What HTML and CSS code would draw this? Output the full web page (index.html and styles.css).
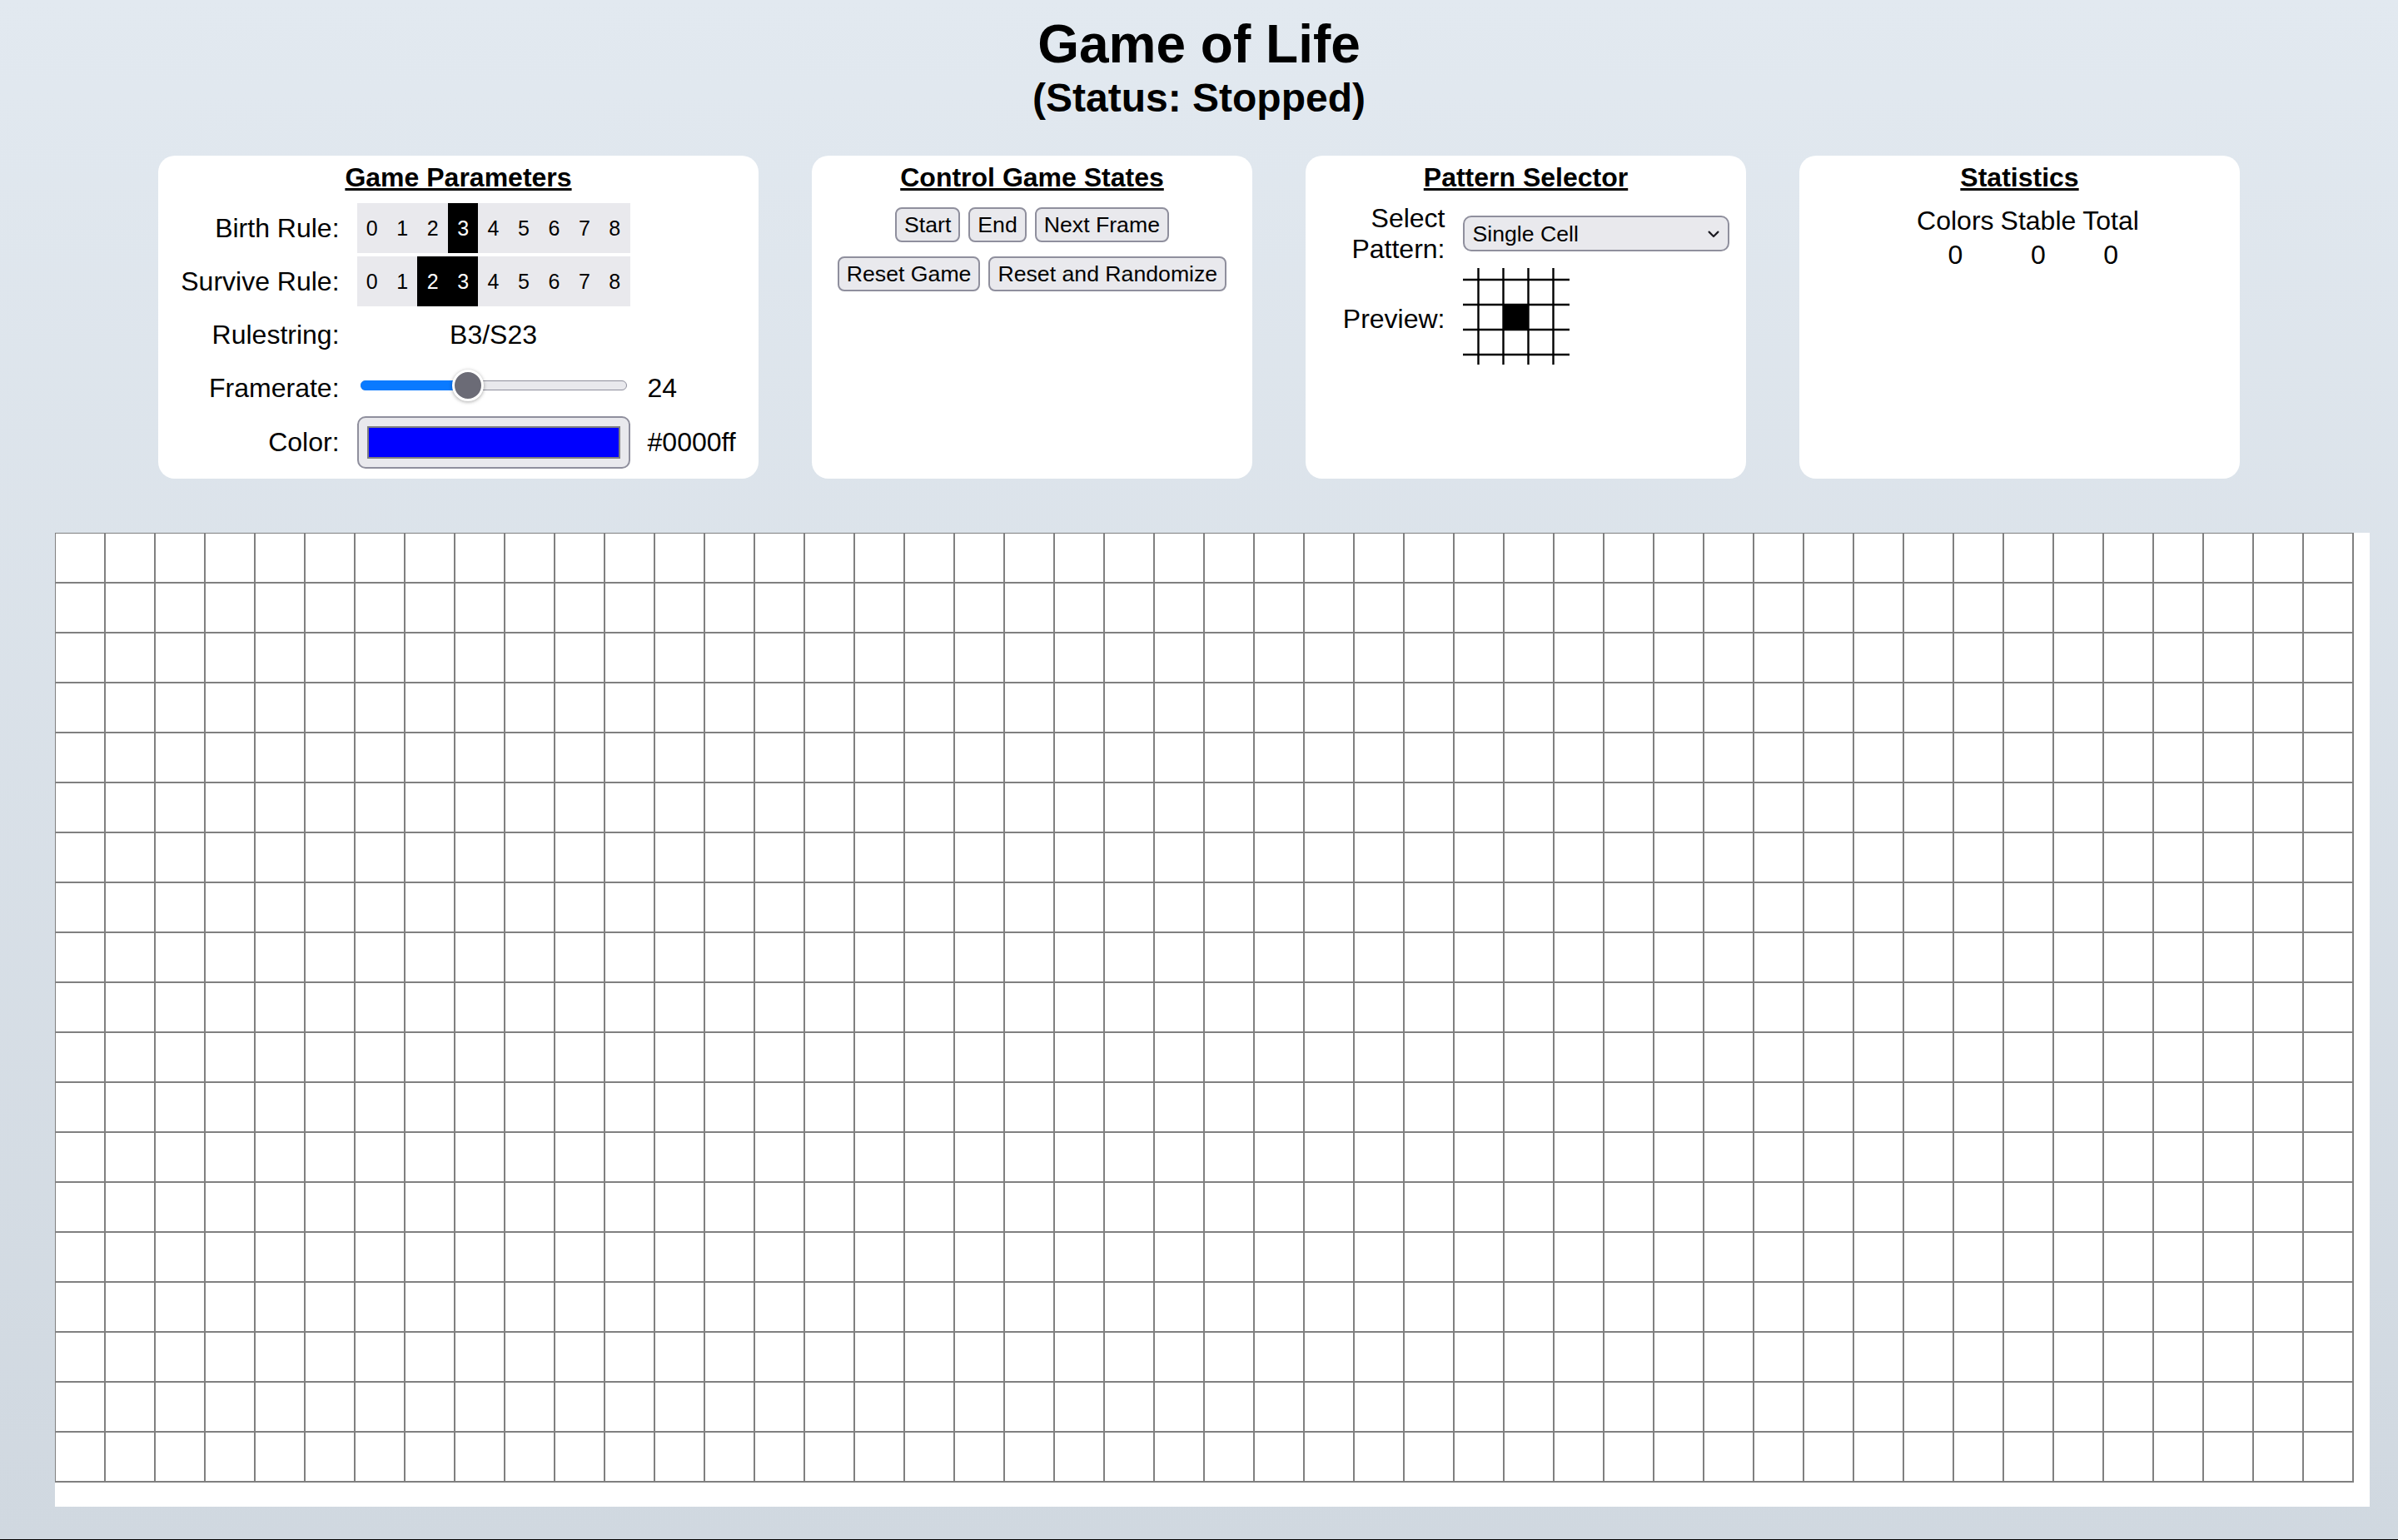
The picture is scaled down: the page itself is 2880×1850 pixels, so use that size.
FILE: index.html
```html
<!DOCTYPE html>
<html lang="en">
<head>
<meta charset="utf-8">
<title>Game of Life</title>
<link rel="stylesheet" href="styles.css">
</head>
<body>
<header class="title">
  <h1>Game of Life</h1>
  <h2>(Status: Stopped)</h2>
</header>

<section class="panels">
  <div class="panel panel-params">
    <h3 class="panel-title">Game Parameters</h3>
    <div class="param-grid">
      <span class="label nowrap">Birth Rule:</span>
      <div class="digits">
        <span class="digit">0</span><span class="digit">1</span><span class="digit">2</span><span class="digit on">3</span><span class="digit">4</span><span class="digit">5</span><span class="digit">6</span><span class="digit">7</span><span class="digit">8</span>
      </div>
      <span class="value"></span>

      <span class="label nowrap">Survive Rule:</span>
      <div class="digits">
        <span class="digit">0</span><span class="digit">1</span><span class="digit on">2</span><span class="digit on">3</span><span class="digit">4</span><span class="digit">5</span><span class="digit">6</span><span class="digit">7</span><span class="digit">8</span>
      </div>
      <span class="value"></span>

      <span class="label nowrap">Rulestring:</span>
      <span class="rulestring">B3/S23</span>
      <span class="value"></span>

      <span class="label nowrap">Framerate:</span>
      <div class="slider">
        <div class="slider-track"><div class="slider-fill" style="width: 130px"></div></div>
        <div class="slider-thumb" style="left: 110px"></div>
      </div>
      <span class="value">24</span>

      <span class="label nowrap">Color:</span>
      <div class="color-well"><div class="swatch"></div></div>
      <span class="value">#0000ff</span>
    </div>
  </div>

  <div class="panel panel-controls">
    <h3 class="panel-title">Control Game States</h3>
    <div class="button-rows">
      <div class="button-row">
        <button class="btn" type="button">Start</button>
        <button class="btn" type="button">End</button>
        <button class="btn" type="button">Next Frame</button>
      </div>
      <div class="button-row">
        <button class="btn" type="button">Reset Game</button>
        <button class="btn" type="button">Reset and Randomize</button>
      </div>
    </div>
  </div>

  <div class="panel panel-pattern">
    <h3 class="panel-title">Pattern Selector</h3>
    <div class="pattern-grid">
      <span class="label">Select Pattern:</span>
      <div class="select-wrap">
        <select class="select">
          <option>Single Cell</option>
          <option>Glider</option>
          <option>Blinker</option>
        </select>
        <svg class="chevron" viewBox="0 0 14 9" width="14" height="9" aria-hidden="true">
          <path d="M1.6 1.6 L7 7 L12.4 1.6" fill="none" stroke="#1c1b22" stroke-width="2.2" stroke-linecap="round" stroke-linejoin="round"/>
        </svg>
      </div>
      <span class="label">Preview:</span>
      <svg class="preview" viewBox="0 0 128 116" width="128" height="116" aria-label="Pattern preview">
        <rect x="48.5" y="44" width="30" height="30" fill="#000"/>
        <g stroke="#000" stroke-width="2.4">
          <line x1="18.5" y1="0" x2="18.5" y2="116"/>
          <line x1="48.5" y1="0" x2="48.5" y2="116"/>
          <line x1="78.5" y1="0" x2="78.5" y2="116"/>
          <line x1="108.5" y1="0" x2="108.5" y2="116"/>
          <line x1="0" y1="14" x2="128" y2="14"/>
          <line x1="0" y1="44" x2="128" y2="44"/>
          <line x1="0" y1="74" x2="128" y2="74"/>
          <line x1="0" y1="104" x2="128" y2="104"/>
        </g>
      </svg>
    </div>
  </div>

  <div class="panel panel-stats">
    <h3 class="panel-title">Statistics</h3>
    <div class="stats-grid">
      <span>Colors</span><span>Stable</span><span>Total</span>
      <span>0</span><span>0</span><span>0</span>
    </div>
  </div>
</section>

<div class="board">
  <div class="board-lines"></div>
</div>
</body>
</html>
```

FILE: styles.css
```css
* {
  box-sizing: border-box;
}

html {
  background: #000;
}

body {
  margin: 0;
  padding: 16px 16px 0;
  min-height: calc(100vh - 1px);
  background: linear-gradient(to bottom, #e2e9f0, #d0d8e0);
  font-family: "Liberation Sans", Arial, Helvetica, sans-serif;
  font-size: 32px;
  line-height: 1.15;
  color: #000;
}

/* ---------- title ---------- */
.title {
  text-align: center;
}

.title h1 {
  margin: 0;
  font-size: 64px;
  line-height: 74px;
  font-weight: bold;
}

.title h2 {
  margin: 0;
  font-size: 48px;
  line-height: 55px;
  font-weight: bold;
}

/* ---------- panels ---------- */
.panels {
  display: flex;
  justify-content: center;
  align-items: stretch;
  gap: 64px;
  margin-top: 42px;
}

.panel {
  background: #fff;
  border-radius: 20px;
  padding: 8px 0 12px;
  display: flex;
  flex-direction: column;
  align-items: center;
}

.panel-params {
  width: 721px;
}

.panel-controls,
.panel-pattern,
.panel-stats {
  width: 529px;
}

.panel-title {
  margin: 0 0 12px;
  font-size: 32px;
  line-height: 37px;
  font-weight: bold;
  text-decoration: underline;
  text-align: center;
}

/* ---------- game parameters ---------- */
.param-grid {
  display: grid;
  grid-template-columns: auto 328px auto;
  grid-template-rows: 60px 60px 60px 60px 63px;
  column-gap: 21px;
  row-gap: 4px;
}

.label {
  text-align: right;
  align-self: center;
}

.nowrap {
  white-space: nowrap;
}

.value {
  align-self: center;
  white-space: nowrap;
}

.digits {
  display: grid;
  grid-template-columns: repeat(9, 1fr);
  background: #e9e9ed;
}

.digit {
  display: flex;
  align-items: center;
  justify-content: center;
  font-size: 25px;
}

.digit.on {
  background: #000;
  color: #fff;
}

.rulestring {
  align-self: center;
  text-align: center;
}

.slider {
  position: relative;
  align-self: start;
  width: 320px;
  height: 38px;
  margin: 8px 0 0 4px;
  padding-top: 13px;
}

.slider-track {
  height: 12px;
  border-radius: 6px;
  background: #e9e9ed;
  border: 1px solid #8f8f9d;
}

.slider-fill {
  height: 12px;
  margin: -1px 0 0 -1px;
  border-radius: 6px 0 0 6px;
  background: #0a7aff;
}

.slider-thumb {
  position: absolute;
  top: 0;
  width: 38px;
  height: 38px;
  border-radius: 50%;
  background: #6b6b76;
  border: 3px solid #fff;
  box-shadow: 0 1px 4px rgba(0, 0, 0, 0.35);
}

.color-well {
  width: 328px;
  height: 63px;
  border: 2px solid #8f8f9d;
  border-radius: 10px;
  background: #e9e9ed;
  padding: 10px;
}

.swatch {
  height: 100%;
  border: 2px solid #808080;
  background: #0000ff;
}

/* ---------- controls ---------- */
.button-rows {
  display: flex;
  flex-direction: column;
  align-items: center;
  gap: 17px;
  margin-top: 5px;
}

.button-row {
  display: flex;
  gap: 10px;
}

.btn {
  height: 42px;
  padding: 0 9px;
  border: 2px solid #8f8f9d;
  border-radius: 8px;
  background: #e9e9ed;
  color: #000;
  font-family: "Liberation Sans", Arial, Helvetica, sans-serif;
  font-size: 26.67px;
  line-height: 1;
}

/* ---------- pattern selector ---------- */
.pattern-grid {
  display: grid;
  grid-template-columns: 147px 320px;
  column-gap: 21px;
  row-gap: 4px;
}

.select-wrap {
  position: relative;
  align-self: center;
}

.select {
  display: block;
  appearance: none;
  -webkit-appearance: none;
  width: 320px;
  height: 43px;
  margin: 0;
  padding: 0 40px 0 10px;
  border: 2px solid #8f8f9d;
  border-radius: 10px;
  background: #e9e9ed;
  color: #000;
  font-family: "Liberation Sans", Arial, Helvetica, sans-serif;
  font-size: 26.67px;
}

.chevron {
  position: absolute;
  right: 12px;
  top: 18px;
  pointer-events: none;
}

.preview {
  display: block;
  margin-bottom: 8px;
}

/* ---------- statistics ---------- */
.stats-grid {
  display: grid;
  grid-template-columns: repeat(3, auto);
  column-gap: 8px;
  row-gap: 4px;
  justify-items: center;
  margin: 3px 0 0 20px;
}

/* ---------- board ---------- */
.board {
  width: 2780px;
  height: 1170px;
  margin: 65px 0 0 50px;
  background: #fff;
}

.board-lines {
  width: 2761px;
  height: 1141px;
  background-image:
    linear-gradient(to right, #808080 2px, transparent 2px),
    linear-gradient(to bottom, #808080 2px, transparent 2px);
  background-size: 60px 60px;
  background-position: -1px -1px;
}
```
